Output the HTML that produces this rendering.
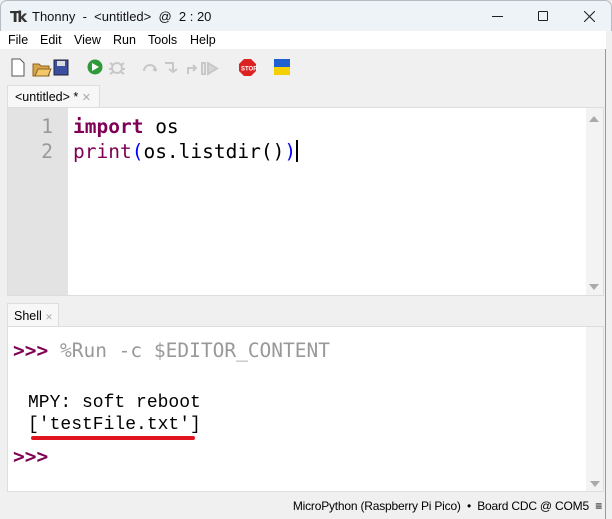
<!DOCTYPE html>
<html><head><style>
*{margin:0;padding:0;box-sizing:border-box}
body{width:612px;height:519px;overflow:hidden;background:#f0f0f0;font-family:"Liberation Sans",sans-serif;position:relative}
.abs{position:absolute}
.title{left:0;top:0;width:612px;height:31px;background:#eef3f8;border:1px solid #b8bcc2;border-bottom:none;border-radius:7px 7px 0 0}
.menu{left:0;top:31px;width:606px;height:18px;background:#fff;font-size:12.5px}
.menu span{position:absolute;top:2px}
.mono{font-family:"DejaVu Sans Mono",monospace}
.cm{font-family:"Liberation Mono",monospace}
</style></head><body>
<div class="abs title">
  <div class="abs" style="left:9px;top:7px;font:bold 15px 'DejaVu Sans',sans-serif;color:#333;letter-spacing:-3px">Tk</div>
  <div class="abs" style="left:31px;top:8px;font-size:13px;color:#111">Thonny &nbsp;- &nbsp;&lt;untitled&gt; &nbsp;@ &nbsp;2 : 20</div>
  <div class="abs" style="left:491px;top:15px;width:11px;height:1px;background:#222"></div>
  <div class="abs" style="left:537px;top:10px;width:10px;height:10px;border:1px solid #222;border-radius:1px"></div>
  <svg class="abs" style="left:583px;top:10px" width="11" height="11"><path d="M0 0L11 11M11 0L0 11" stroke="#222" stroke-width="1.1"/></svg>
</div>
<div class="abs" style="left:605px;top:31px;width:1px;height:488px;background:#999"></div>
<div class="abs menu">
  <span style="left:8px">File</span><span style="left:40px">Edit</span><span style="left:74px">View</span><span style="left:113px">Run</span><span style="left:148px">Tools</span><span style="left:190px">Help</span>
</div>
<svg class="abs" style="left:10px;top:58px" width="290" height="20">
  <path d="M2 1h8l4 4v13H2z" fill="#fff" stroke="#555"/>
  <path d="M23 6h6l2 2h8v10H23z" fill="#d9a54a" stroke="#8a6420"/><path d="M25 18l3-7h13l-3 7z" fill="#f2c96a" stroke="#8a6420"/>
  <rect x="44" y="2" width="14" height="15" fill="#3a4fa0" stroke="#223"/><rect x="47" y="3" width="8" height="5" fill="#ddd"/>
  <circle cx="85" cy="9" r="7.5" fill="#2f9a3a"/><path d="M82 5l7 4-7 4z" fill="#fff"/>
  <g stroke="#c8c8c8" fill="none" stroke-width="2"><circle cx="107" cy="10" r="5"/><path d="M100 5l3 2M114 5l-3 2M99 11h3M112 11h3M100 16l3-2M114 16l-3-2"/>
  <path d="M134 13a6 6 0 0 1 12 0M146 13l-3-2"/><path d="M155 5h8v8M159 11l4 3 4-3"/><path d="M178 16v-6h8M183 7l3 3-3 3"/><rect x="192" y="5" width="3" height="11"/><path d="M198 5l9 5.5-9 5.5z" fill="#d6d6d6"/></g>
  <polygon points="234,1 241,1 246,6 246,13 241,18 234,18 229,13 229,6" fill="#d22"/>
  <text x="231" y="12.5" font-size="6" fill="#fff" font-family="Liberation Sans" font-weight="bold">STOP</text>
  <rect x="264" y="1" width="16" height="8" fill="#1f5fd0"/><rect x="264" y="9" width="16" height="8" fill="#f5d000"/>
</svg>
<div class="abs" style="left:7px;top:85px;width:93px;height:23px;background:#f7f7f7;border:1px solid #ddd;border-bottom:none;font-size:12.5px;padding:4px 0 0 7px;color:#000;white-space:nowrap">&lt;untitled&gt; * <span style="color:#aaa;font-size:11px">✕</span></div>
<div class="abs" style="left:7px;top:107px;width:597px;height:189px;background:#fff;border:1px solid #ddd"></div>
<div class="abs" style="left:8px;top:108px;width:60px;height:187px;background:#e3e3e3"></div>
<div class="abs" style="left:586px;top:108px;width:17px;height:187px;background:#f3f3f3"></div>
<svg class="abs" style="left:589px;top:115px" width="10" height="8"><path d="M0 7L5 1L10 7z" fill="#aaa"/></svg>
<svg class="abs" style="left:589px;top:283px" width="10" height="8"><path d="M0 1L5 7L10 1z" fill="#aaa"/></svg>
<div class="abs mono" style="left:40px;top:114px;font-size:19.5px;line-height:25px;color:#999;text-align:right;width:13px">1<br>2</div>
<div class="abs mono" style="left:73px;top:114px;font-size:19.5px;line-height:25px;color:#000;white-space:pre"><span style="color:#7f0055;font-weight:bold">import</span> os
<span style="color:#7f0055">print</span><span style="color:#0000ff">(</span>os.listdir()<span style="color:#0000ff">)</span><span style="display:inline-block;width:2px;height:22px;background:#000;vertical-align:-4px"></span></div>
<div class="abs" style="left:7px;top:303px;width:52px;height:24px;background:#f7f7f7;border:1px solid #ddd;border-bottom:none;font-size:12.5px;padding:5px 0 0 6px;white-space:nowrap">Shell <span style="color:#aaa;font-size:9px">✕</span></div>
<div class="abs" style="left:7px;top:326px;width:597px;height:166px;background:#fff;border:1px solid #ddd"></div>
<div class="abs" style="left:586px;top:327px;width:17px;height:164px;background:#f3f3f3"></div>
<svg class="abs" style="left:590px;top:480px" width="10" height="8"><path d="M0 1L5 7L10 1z" fill="#aaa"/></svg>
<div class="abs mono" style="left:13px;top:339px;font-size:19.5px;color:#999;white-space:pre"><span style="color:#7f0055;font-weight:bold">&gt;&gt;&gt;</span> %Run -c $EDITOR_CONTENT</div>
<div class="abs cm" style="left:28px;top:392px;font-size:18px;line-height:22px;color:#000;white-space:pre">MPY: soft reboot
['testFile.txt']</div>
<div class="abs" style="left:31px;top:436px;width:164px;height:4px;background:#e0141e;border-radius:2px"></div>
<div class="abs mono" style="left:13px;top:445px;font-size:19.5px;color:#7f0055;font-weight:bold">&gt;&gt;&gt;</div>
<div class="abs" style="right:10px;top:499px;font-size:12px;color:#000;white-space:pre;letter-spacing:-0.2px">MicroPython (Raspberry Pi Pico)  •  Board CDC @ COM5  ≡</div>
</body></html>
